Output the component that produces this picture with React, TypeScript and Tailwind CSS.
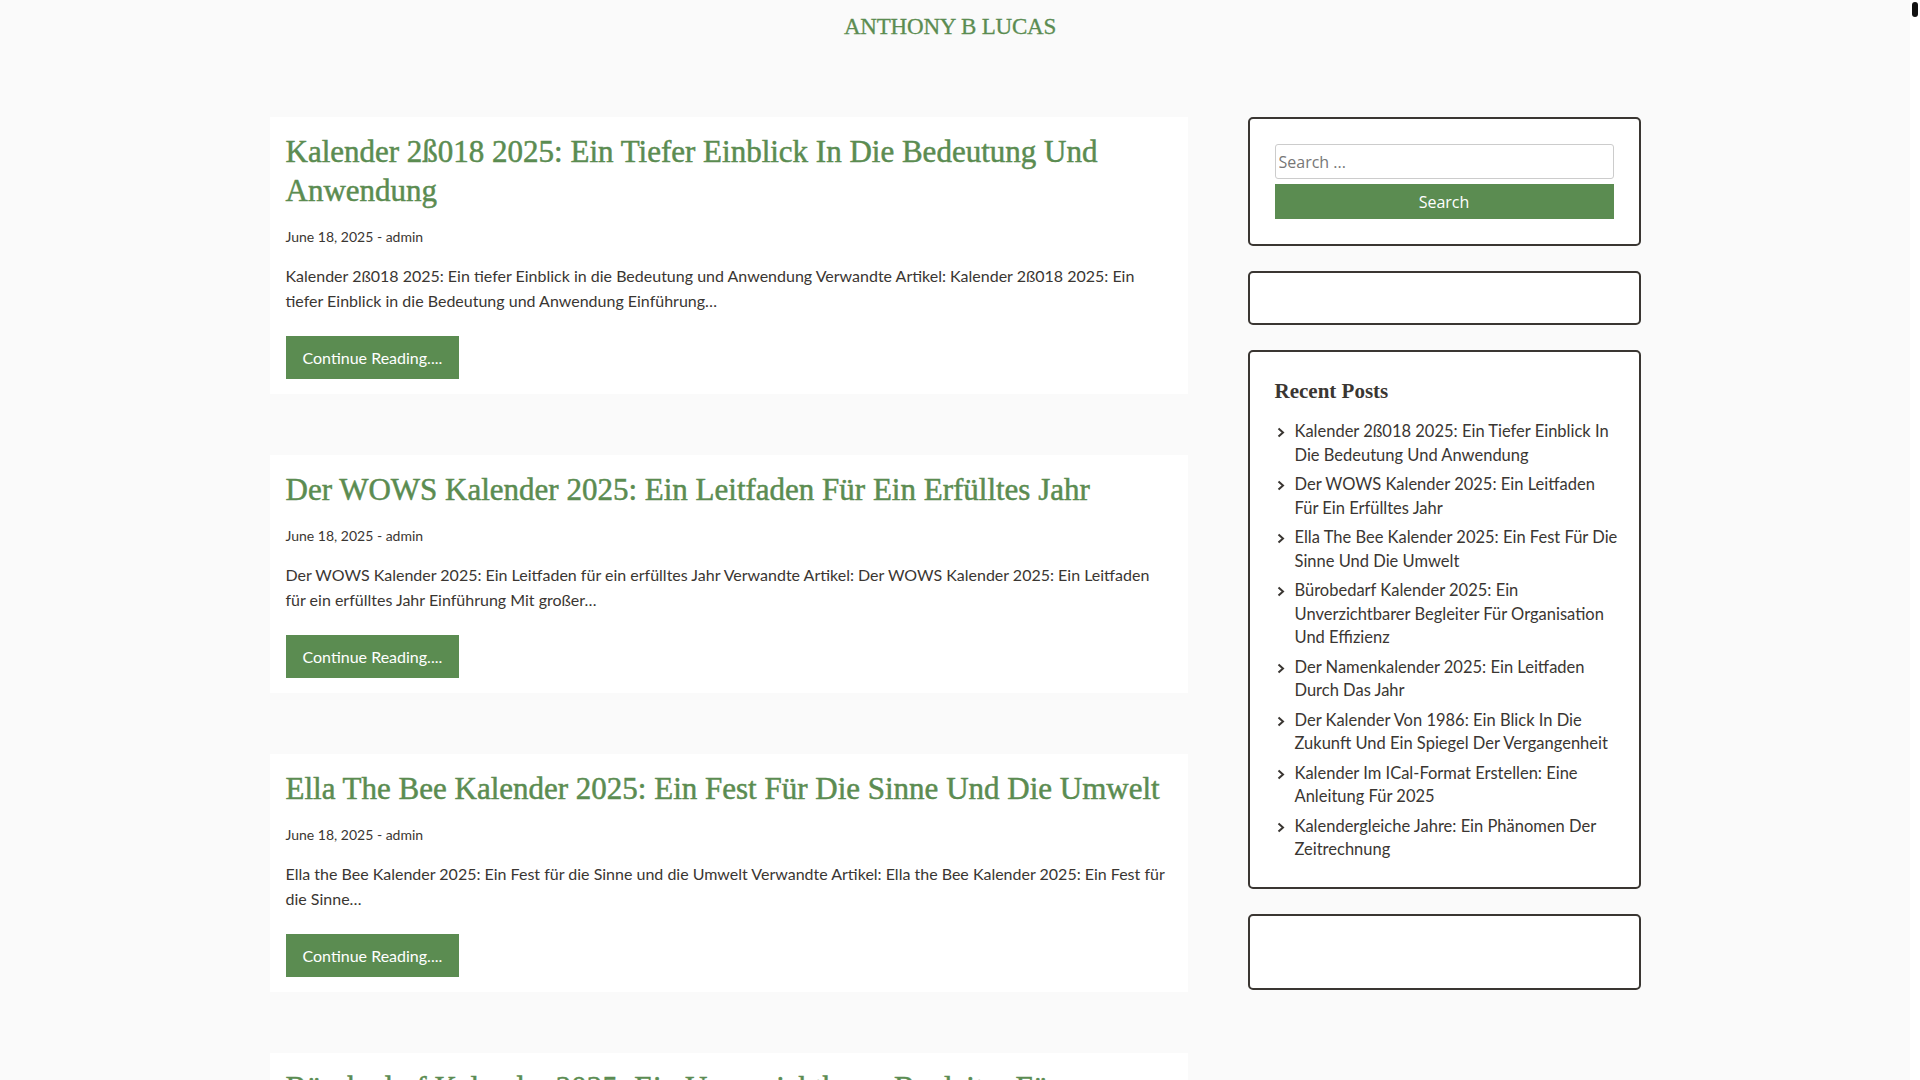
const GREEN = "#5b8c51";

type Post = {
  title: string;
  excerpt: string;
};

const POSTS: Post[] = [
  {
    title: "Kalender 2ß018 2025: Ein Tiefer Einblick In Die Bedeutung Und Anwendung",
    excerpt:
      "Kalender 2ß018 2025: Ein tiefer Einblick in die Bedeutung und Anwendung Verwandte Artikel: Kalender 2ß018 2025: Ein tiefer Einblick in die Bedeutung und Anwendung Einführung…",
  },
  {
    title: "Der WOWS Kalender 2025: Ein Leitfaden Für Ein Erfülltes Jahr",
    excerpt:
      "Der WOWS Kalender 2025: Ein Leitfaden für ein erfülltes Jahr Verwandte Artikel: Der WOWS Kalender 2025: Ein Leitfaden für ein erfülltes Jahr Einführung Mit großer…",
  },
  {
    title: "Ella The Bee Kalender 2025: Ein Fest Für Die Sinne Und Die Umwelt",
    excerpt:
      "Ella the Bee Kalender 2025: Ein Fest für die Sinne und die Umwelt Verwandte Artikel: Ella the Bee Kalender 2025: Ein Fest für die Sinne…",
  },
  {
    title: "Bürobedarf Kalender 2025: Ein Unverzichtbarer Begleiter Für Organisation Und Effizienz",
    excerpt:
      "Bürobedarf Kalender 2025: Ein unverzichtbarer Begleiter für Organisation und Effizienz Verwandte Artikel: Bürobedarf Kalender 2025: Ein unverzichtbarer Begleiter…",
  },
];

const RECENT = [
  "Kalender 2ß018 2025: Ein Tiefer Einblick In Die Bedeutung Und Anwendung",
  "Der WOWS Kalender 2025: Ein Leitfaden Für Ein Erfülltes Jahr",
  "Ella The Bee Kalender 2025: Ein Fest Für Die Sinne Und Die Umwelt",
  "Bürobedarf Kalender 2025: Ein Unverzichtbarer Begleiter Für Organisation Und Effizienz",
  "Der Namenkalender 2025: Ein Leitfaden Durch Das Jahr",
  "Der Kalender Von 1986: Ein Blick In Die Zukunft Und Ein Spiegel Der Vergangenheit",
  "Kalender Im ICal-Format Erstellen: Eine Anleitung Für 2025",
  "Kalendergleiche Jahre: Ein Phänomen Der Zeitrechnung",
];

function Chevron() {
  return (
    <svg width="8" height="11" viewBox="0 0 8 11" className="mt-[7px] shrink-0">
      <path d="M1.5 1.5 L6 5.5 L1.5 9.5" fill="none" stroke="#3a3632" strokeWidth="2" />
    </svg>
  );
}

function PostCard({ post }: { post: Post }) {
  return (
    <article className="mb-[61px] bg-white px-4 pb-[15px] pt-[15px]">
      <h2
        className="text-[31px] leading-[39px] text-[#5b8c51] [-webkit-text-stroke:0.5px_#5b8c51]"
        style={{ fontFamily: '"Liberation Serif", serif' }}
      >
        {post.title}
      </h2>
      <div className="mt-[17px] text-[14px] leading-[20px] text-[#3a3632]">June 18, 2025 - admin</div>
      <p className="mt-[17px] text-[16px] leading-[24.5px] text-[#3a3632]">{post.excerpt}</p>
      <button className="mt-[23px] h-[43px] bg-[#5b8c51] px-[17px] text-[16px] text-white">
        Continue Reading....
      </button>
    </article>
  );
}

export default function App() {
  return (
    <div
      className="flex h-screen overflow-hidden bg-[#fafafa]"
      style={{ fontFamily: 'Lato, "Liberation Sans", sans-serif' }}
    >
      <div className="min-w-0 flex-1">
        <header className="flex h-[54px] items-center justify-center pr-[10px]">
          <span
            className="text-[23px] tracking-[-0.2px] [-webkit-text-stroke:0.3px_#5b8c51]"
            style={{ color: GREEN, fontFamily: '"Liberation Serif", serif' }}
          >
            ANTHONY B LUCAS
          </span>
        </header>

        <div className="mx-auto mt-[63px] flex w-[1371px] justify-between">
          <main className="w-[918px]">
            {POSTS.map((p) => (
              <PostCard key={p.title} post={p} />
            ))}
          </main>

          <aside className="w-[393px]">
            <section className="mb-[25px] rounded-[5px] border-2 border-[#3a3632] bg-white p-[25px]">
              <input
                placeholder="Search ..."
                className="block h-[35px] w-full rounded-[3px] border border-[#cccccc] px-[3px] text-[16px] text-[#3a3632] placeholder:text-[#777777]"
                style={{ fontFamily: '"Open Sans", sans-serif' }}
              />
              <button
                className="mt-[5px] block h-[35px] w-full bg-[#5b8c51] text-[16px] text-white"
                style={{ fontFamily: '"Open Sans", sans-serif' }}
              >
                Search
              </button>
            </section>

            <section className="mb-[25px] rounded-[5px] border-2 border-[#3a3632] bg-white p-[25px]" />

            <section className="mb-[25px] rounded-[5px] border-2 border-[#3a3632] bg-white p-[25px] pr-[18px]">
              <h3
                className="text-[21px] font-bold leading-[28px] text-[#3a3632]"
                style={{ fontFamily: '"Liberation Serif", serif' }}
              >
                Recent Posts
              </h3>
              <ul className="mt-[15px] flex flex-col gap-[6px]">
                {RECENT.map((r) => (
                  <li key={r} className="flex gap-[10px] pl-[2px]">
                    <Chevron />
                    <span className="text-[16.5px] leading-[23.5px] text-[#3a3632]">{r}</span>
                  </li>
                ))}
              </ul>
            </section>

            <section className="mb-[25px] rounded-[5px] border-2 border-[#3a3632] bg-white p-[25px]">
              <div className="h-[22px]" />
            </section>
          </aside>
        </div>
      </div>

      <div className="relative w-[10px] shrink-0 bg-white">
        <div className="absolute left-[2px] top-[2px] h-[15px] w-[6px] rounded-full bg-[#111111]" />
      </div>
    </div>
  );
}
